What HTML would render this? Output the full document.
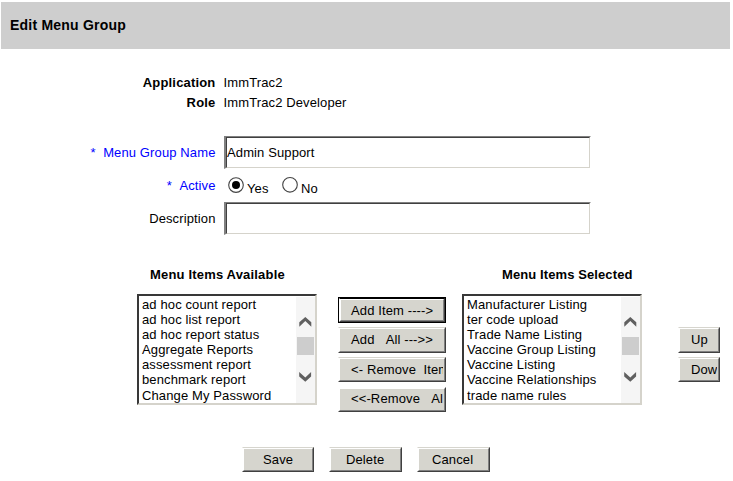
<!DOCTYPE html>
<html><head><meta charset="utf-8">
<style>
html,body{margin:0;padding:0;background:#fff;width:733px;height:481px;overflow:hidden}
body{font-family:"Liberation Sans",sans-serif;font-size:13px;line-height:15px;color:#000;position:relative;letter-spacing:0.12px}
.a{position:absolute;white-space:pre}
.hdr{position:absolute;left:1px;top:2px;width:729px;height:47px;background:#cecece}
.ttl{position:absolute;left:10px;top:17px;font-size:14px;font-weight:bold;line-height:16px;white-space:pre;letter-spacing:0.22px}
.lbl{position:absolute;right:517.5px;white-space:pre;text-align:right}
.b{font-weight:bold;letter-spacing:0.18px}
.blue{color:#0000ff}
.inp{position:absolute;left:224px;width:367px;height:33px;box-sizing:border-box;border-style:solid;border-width:1px 1px 1px 2px;border-color:#808080 #fff #fff #808080;background:#fff}
.inp i{position:absolute;left:0;top:0;right:0;bottom:0;border-style:solid;border-width:1px;border-color:#404040 #d5d3cb #d5d3cb #404040}
.lb{position:absolute;top:294px;width:180px;height:111px;box-sizing:border-box;border-style:solid;border-width:2px;border-color:#383838 #d5d3cb #d5d3cb #383838;background:#fff;overflow:hidden}
.lb .it{position:absolute;left:3px;white-space:pre}
.sb{position:absolute;left:157px;top:1px;width:19px;height:106px;background:#f5f5f5}
.thumb{position:absolute;left:1px;top:40px;width:17px;height:18px;background:#cdcdcd}
.btn{position:absolute;box-sizing:border-box;background:#d6d5ce;border-style:solid;border-width:1px;border-color:#d6d5ce #404040 #404040 #fff;overflow:hidden;white-space:pre}
.btn i{position:absolute;left:0;top:0;right:0;bottom:0;border-style:solid;border-width:1px;border-color:#fff #808080 #808080 #fff}
.btn u{position:absolute;left:1px;top:1px;right:2px;bottom:1px;overflow:hidden;text-decoration:none}
.btn span{position:absolute;top:3px;white-space:pre}
.def{border-color:#000}
.def i{border-color:#000 #404040 #404040 #fff}
.def b{position:absolute;left:1px;top:1px;right:1px;bottom:1px;border-style:solid;border-width:1px;border-color:#fff #808080 #808080 #fff}
</style></head><body>
<div class="hdr"></div>
<div class="ttl">Edit Menu Group</div>

<div class="lbl b" style="top:75px">Application</div>
<div class="a" style="left:223.5px;top:75px">ImmTrac2</div>
<div class="lbl b" style="top:95px">Role</div>
<div class="a" style="left:223.5px;top:95px">ImmTrac2 Developer</div>

<div class="lbl blue" style="top:145px">*&nbsp;&nbsp;Menu Group Name</div>
<div class="inp" style="top:136px"><i></i></div>
<div class="a" style="left:227px;top:145px">Admin Support</div>

<div class="lbl blue" style="top:178px">*&nbsp;&nbsp;Active</div>
<svg class="a" style="left:220px;top:170px" width="90" height="30">
<circle cx="16" cy="15.1" r="7.3" fill="#fff" stroke="#444" stroke-width="1.1"/>
<circle cx="16" cy="15.1" r="4" fill="#000"/>
<circle cx="70" cy="14.8" r="7.3" fill="#fff" stroke="#444" stroke-width="1.1"/>
</svg>
<div class="a" style="left:247px;top:181px">Yes</div>
<div class="a" style="left:301px;top:181px">No</div>

<div class="lbl" style="top:211px">Description</div>
<div class="inp" style="top:202px"><i></i></div>

<div class="a b" style="left:150px;top:267px">Menu Items Available</div>
<div class="a b" style="left:502px;top:267px;letter-spacing:0.1px">Menu Items Selected</div>

<div class="lb" style="left:137px">
<div class="it" style="top:1px">ad hoc count report</div>
<div class="it" style="top:16px">ad hoc list report</div>
<div class="it" style="top:31px">ad hoc report status</div>
<div class="it" style="top:46px">Aggregate Reports</div>
<div class="it" style="top:61px">assessment report</div>
<div class="it" style="top:76px">benchmark report</div>
<div class="it" style="top:92px">Change My Password</div>
<div class="sb"><div class="thumb"></div></div>
</div>

<div class="lb" style="left:462px">
<div class="it" style="top:1px">Manufacturer Listing</div>
<div class="it" style="top:16px">ter code upload</div>
<div class="it" style="top:31px">Trade Name Listing</div>
<div class="it" style="top:46px">Vaccine Group Listing</div>
<div class="it" style="top:61px">Vaccine Listing</div>
<div class="it" style="top:76px">Vaccine Relationships</div>
<div class="it" style="top:92px">trade name rules</div>
<div class="sb"><div class="thumb"></div></div>
</div>

<svg class="a" style="left:0;top:0" width="733" height="481">
<g fill="#606060">
<polygon points="299.3,322.3 305.3,317 311.3,322.3 311.3,326.8 305.3,321 299.3,326.8"/>
<polygon points="299.2,372.1 305.3,377.5 311.1,372.1 311.1,376.5 305.3,381.8 299.2,376.5"/>
<polygon points="624.3,322.3 630.3,317 636.3,322.3 636.3,326.8 630.3,321 624.3,326.8"/>
<polygon points="624.2,372.1 630.3,377.5 636.1,372.1 636.1,376.5 630.3,381.8 624.2,376.5"/>
</g>
</svg>

<div class="btn def" style="left:338px;top:297px;width:108px;height:26px"><i></i><b></b><u><span style="left:11px;top:4px">Add Item ----&gt;</span></u></div>
<div class="btn" style="left:338px;top:327px;width:108px;height:26px"><i></i><u><span style="left:11px">Add&nbsp;&nbsp;&nbsp;All ---&gt;&gt;</span></u></div>
<div class="btn" style="left:338px;top:357px;width:108px;height:25px"><i></i><u><span style="left:11px">&lt;- Remove&nbsp;&nbsp;Item</span></u></div>
<div class="btn" style="left:338px;top:387px;width:108px;height:25px;border-top-color:#fff"><i></i><u><span style="left:11px;top:2px">&lt;&lt;-Remove&nbsp;&nbsp;&nbsp;All</span></u></div>

<div class="btn" style="left:678px;top:327px;width:42px;height:26px"><i></i><u><span style="left:11px">Up</span></u></div>
<div class="btn" style="left:678px;top:357px;width:42px;height:25px"><i></i><u><span style="left:11px">Down</span></u></div>

<div class="btn" style="left:242px;top:447px;width:72px;height:25px"><i></i><u><span style="left:19px">Save</span></u></div>
<div class="btn" style="left:329px;top:447px;width:73px;height:25px"><i></i><u><span style="left:15px">Delete</span></u></div>
<div class="btn" style="left:417px;top:447px;width:73px;height:25px"><i></i><u><span style="left:13px">Cancel</span></u></div>
</body></html>
